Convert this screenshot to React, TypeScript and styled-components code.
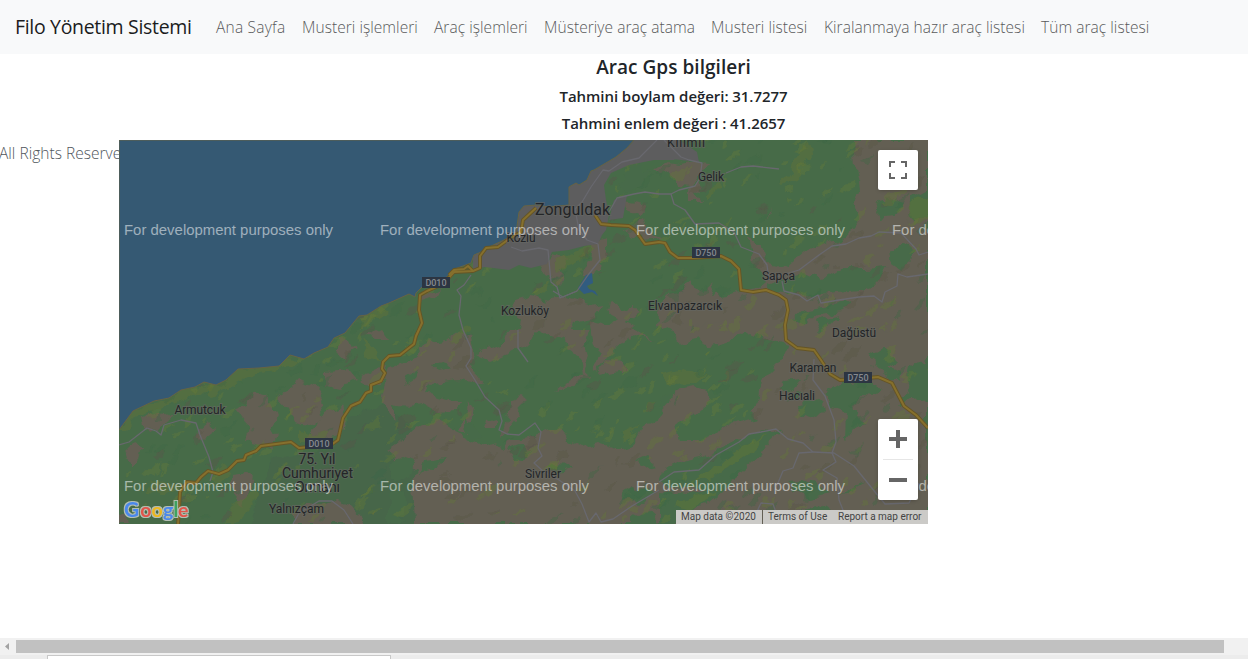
import React from "react";
import styled, { createGlobalStyle } from "styled-components";

const GlobalStyle = createGlobalStyle`
  * { box-sizing: border-box; }
  body { margin: 0; background: #fff; font-family: "Open Sans", "Noto Sans", sans-serif; color: #212529; overflow: hidden; }
`;

const Page = styled.div`
  display: flex;
  flex-direction: column;
  height: 659px;
  width: 1248px;
  overflow: hidden;
`;

const Navbar = styled.nav`
  display: flex;
  align-items: center;
  height: 54px;
  flex: none;
  padding: 0 0 1px 15px;
  background: #f8f9fa;
  white-space: nowrap;
`;

const Brand = styled.a`
  width: 193px;
  font-size: 19.5px;
  font-weight: 400;
  letter-spacing: -0.32px;
  color: #1b1c1d;
`;

const NavLink = styled.a<{ $w: number; $ls?: number }>`
  width: ${(p) => p.$w}px;
  padding-left: 8px;
  font-size: 15.5px;
  font-weight: 300;
  letter-spacing: ${(p) => p.$ls ?? 0.05}px;
  color: #58595a;
`;

const Heading = styled.header`
  display: flex;
  flex-direction: column;
  align-items: center;
  height: 86px;
  flex: none;
  padding-left: 99px;
`;

const Title = styled.h5`
  margin: 0;
  font-size: 19px;
  font-weight: 600;
  line-height: 26px;
  letter-spacing: 0.03px;
`;

const Reading = styled.h6`
  margin: 4px 0 0;
  font-size: 15px;
  font-weight: 600;
  line-height: 23px;
  letter-spacing: -0.05px;

  &:first-of-type {
    margin-top: 5px;
  }
`;

const Content = styled.main`
  display: flex;
  height: 384px;
  flex: none;
`;

const Footer = styled.footer`
  width: 119px;
  overflow: hidden;
  white-space: nowrap;
  font-size: 15.5px;
  font-weight: 300;
  line-height: 26px;
  letter-spacing: 0.02px;
  text-indent: -1px;
  color: #50565c;
`;

const MapFrame = styled.section`
  position: relative;
  width: 809px;
  height: 384px;
  overflow: hidden;
`;

const MapCanvas = styled.svg`
  display: block;
`;

const ControlBox = styled.div<{ $top: number; $height: number }>`
  position: absolute;
  right: 10px;
  top: ${(p) => p.$top}px;
  width: 40px;
  height: ${(p) => p.$height}px;
  display: flex;
  flex-direction: column;
  align-items: center;
  background: #fff;
  border-radius: 2px;
  box-shadow: 0 1px 4px -1px rgba(0, 0, 0, 0.3);
`;

const ControlIcon = styled.svg`
  display: block;
  width: 40px;
  height: 40px;
`;

const Divider = styled.div`
  width: 30px;
  height: 1px;
  background: #e6e6e6;
`;

const Attribution = styled.div`
  position: absolute;
  right: 0;
  bottom: 0;
  display: flex;
  height: 14px;
  font: 10px/14px Roboto, sans-serif;
  color: #444;
  white-space: nowrap;
`;

const Credit = styled.span<{ $w: number; $line?: boolean }>`
  width: ${(p) => p.$w}px;
  padding-left: 5px;
  background: #cbcac7;
  border-right: ${(p) => (p.$line ? "1px solid #625f54" : "0")};
`;

const Filler = styled.div`
  flex: 1;
`;

const ScrollTrack = styled.div`
  display: flex;
  align-items: center;
  height: 17px;
  flex: none;
  background: #f1f1f1;
`;

const ScrollArrow = styled.svg`
  width: 16px;
  height: 17px;
`;

const ScrollThumb = styled.div`
  width: 1208px;
  height: 13px;
  background: #c1c1c1;
`;

const BottomStrip = styled.div`
  height: 4px;
  flex: none;
  padding-left: 47px;
  background: #ececec;
`;

const BottomField = styled.div`
  width: 344px;
  height: 4px;
  background: #fff;
  border: 1px solid #c8c8c8;
  border-bottom: 0;
`;

const SEA =
  "M0 0V290L14 271L35 261L50 258L62 250L76 247L85 242L97 245L107 240L119 229L140 228L160 226L165 221L171 215L185 219L195 213L209 207L215 198L226 193L235 182L240 176L248 175L262 166L270 163L290 154L296 157L297 153L303 147L328 137L333 130L352 123L355 115L362 112L370 107L385 100L397 93L400 72L405 66L417 65L430 67L450 65L450 47L457 43L460 45L468 40L472 31L475 30L497 17L508 8L515 0Z";

const URBAN =
  "M515 0L508 8L472 31L450 47V65H405L400 72L397 93L370 107L354 115V129L366 127L390 130L400 125L412 128L428 124L433 112L450 110L465 106L479 104L483 95L487 90L490 75L487 60L485 45L492 33L510 25L535 20L555 20L560 12L550 0Z M553 19L580 22L578 12L560 0H540Z M495 60L508 55L504 78L490 80Z";

const TAN = [
  "735 0 737 27 740 47 733 63 740 80 727 97 707 103 687 110 667 127 650 123 643 105 630 96 635 120 648 143 640 150 620 152 590 157 597 143 583 150 570 140 560 153 550 155 540 165 538 185 555 195 560 205 580 200 590 206 607 200 630 193 650 200 668 205 660 223 643 240 640 257 632 270 640 278 610 285 585 300 560 300 555 285 575 278 595 260 590 250 575 247 553 253 548 265 540 277 525 285 515 305 500 308 480 302 463 307 450 300 440 288 430 292 415 298 400 300 385 303 365 308 350 300 340 292 320 280 300 287 285 300 271 310 275 322 300 330 293 345 295 384 809 384 809 0",
  "270 226 283 221 300 215 296 208 310 202 327 200 340 190 352 198 355 212 350 226 360 238 365 244 355 243 340 240 315 243 310 253 330 260 342 262 337 272 320 273 305 265 290 267 275 265 278 282 260 260",
  "356 215 385 202 390 191 400 190 402 180 390 173 395 160 412 155 430 160 448 157 470 165 485 163 475 177 455 182 448 195 438 200 430 192 418 193 405 205 390 213 370 222",
  "445 190 470 190 465 203 470 215 465 230 469 238 455 245 438 251 452 239 462 234 460 218 450 210",
  "470 180 490 185 500 178 515 185 510 190 537 201 515 196 498 208 488 220 478 232 475 227 483 214 475 206",
  "492 231 510 229 505 222 490 220 479 234",
  "22 277 38 273 48 274 56 280 42 287 38 293 24 286",
  "5 312 15 302 24 307 21 318 12 327 7 318",
  "80 291 90 282 97 288 92 296 86 300 79 295",
  "116 270 130 265 135 250 145 256 153 265 158 276 150 290 158 297 151 307 135 302 126 300 130 286",
  "160 257 172 250 180 241 195 246 204 250 200 262 204 278 193 286 183 285 176 282 170 268",
  "204 275 222 266 227 280 222 296 205 299 200 310 184 300 195 290",
  "217 200 231 201 235 210 223 217 217 212",
  "207 232 230 230 238 240 218 247 207 244",
  "254 192 262 188 270 200 260 200 250 195",
  "243 235 264 226 267 238 257 245 240 243",
  "112 335 125 333 135 345 128 356 125 368 116 354 112 345",
  "174 373 190 364 215 360 232 366 240 375 245 384 174 384",
  "0 373 7 376 10 384 0 384",
  "560 24 578 20 592 21 582 34 572 46 560 45 552 34 540 36 533 30 548 22",
  "570 50 580 40 584 52 577 55 583 63 570 63",
  "505 60 530 65 520 77 508 72",
  "475 101 490 98 490 113 480 130 470 138 462 136 472 120",
  "433 112 430 121 420 128 432 134 435 145 445 142 440 131 450 120",
  "505 88 525 80 530 92 545 98 522 100 510 97",
  "647 78 655 64 651 74",
  "552 175 572 165 590 170 608 168 600 182 580 185 560 190",
  "490 160 502 170 515 165 520 173 503 183 488 175",
  "302 155 325 148 315 158 300 163",
  "390 260 402 256 410 260 400 269 395 280 388 289 381 295 388 280",
  "350 260 355 268 350 292 340 290 348 275",
  "367 279 377 276 377 288 365 288",
];

const GREEN = [
  "510 28 520 20 520 32 532 30 524 43 510 52 500 44 506 37",
  "650 145 667 138 685 131 705 140 723 128 745 128 770 126 760 141 740 150 710 153 680 155 655 152",
  "770 110 782 105 795 108 795 118 782 131 772 124",
  "760 60 775 57 785 62 776 76 760 78 756 68",
  "790 58 809 48 809 78 793 80",
  "686 170 714 165 730 161 722 172 700 175 686 184 675 180",
  "702 180 720 175 709 188 697 191",
  "664 240 682 238 672 250 658 250",
  "680 263 697 260 708 269 697 280 682 275",
  "705 253 722 243 747 240 766 250 755 256 742 255 736 266 742 277 750 285 735 288 726 300 727 273 710 267",
  "752 215 765 207 775 218 768 226 781 230 779 243 768 236 754 224",
  "792 228 809 218 809 258 790 260 782 266 788 247",
  "545 329 560 322 580 318 598 310 618 301 640 291 661 293 649 304 640 318 620 335 602 348 578 350 552 345 540 341",
  "540 350 578 354 607 336 613 344 592 361 570 371 553 384 540 384",
  "670 340 683 339 700 346 712 354 692 358 675 351",
  "685 368 697 362 709 371 725 382 700 381 691 377",
  "720 352 748 340 732 350",
  "305 322 325 319 315 329 302 333",
  "430 324 456 325 446 331 428 332",
  "388 311 401 306 413 310 404 321 394 319",
  "270 327 285 316 295 320 290 335 276 340",
  "270 357 280 346 287 359 283 384 270 384",
  "505 355 522 345 535 351 525 362 508 361",
  "510 378 525 370 540 384 510 384",
  "518 322 530 316 540 325 524 328",
  "289 237 299 231 295 239 286 244",
  "312 225 326 220 334 228 318 232",
  "346 276 355 288 364 297 352 300",
  "377 302 388 300 385 310 376 307",
  "541 257 550 253 550 265 542 274",
  "667 256 680 250 678 260",
];

/* Scrub: the lighter, yellowish bands along the coast and the ridges. */
const SCRUB = [
  "0 290 14 271 35 261 50 258 62 250 76 247 85 242 97 245 90 250 75 253 60 262 40 268 20 275 8 290",
  "85 245 107 240 119 229 140 228 165 221 171 215 178 222 160 231 140 233 125 242 105 250 90 258",
  "240 176 262 167 268 172 255 180 243 190",
  "434 120 455 112 470 107 478 108 465 120 448 126 436 133",
  "674 25 680 10 690 3 692 14 684 28 675 38 664 45 660 44 669 34",
  "588 55 595 44 602 41 597 52 586 62",
  "790 66 800 56 809 60 809 82 795 84",
  "540 234 560 230 585 236 575 244 550 245",
  "575 342 600 325 625 306 645 296 632 312 612 326 592 340",
  "555 366 575 356 600 350 582 364 562 372",
  "115 365 135 351 140 356 128 372 118 384 108 384",
  "30 345 50 340 60 348 45 355 28 354",
  "90 335 106 326 110 334 98 346",
  "180 290 195 298 212 292 200 303 180 302",
  "245 200 258 212 262 222 248 220",
  "504 292 520 285 510 298 500 302",
  "330 200 345 186 349 192 338 202",
  "412 152 430 140 428 149 418 156",
];

const MINOR_ROADS = [
  "M538 0L520 18L503 22L490 31L484 30L472 47L463 62L456 69L460 90L468 100L479 104L481 120L469 135L458 151L441 158L438 147L432 142L429 110L420 108L403 111L392 107",
  "M458 151L444 157L434 151",
  "M352 135L345 145L338 150L342 156L340 175L344 190L352 208L352 218L347 226L356 240L366 257L380 270L383 281L380 290L388 294L400 295L416 283L422 292L419 308L423 316L415 323L425 332L440 340L456 351L463 364L470 382L477 373L482 382L494 379L513 366L530 356L540 350",
  "M490 72L498 58L515 54L526 52L540 54L552 54L560 50L576 46L581 38L583 23L570 20L562 17L545 0",
  "M607 33L622 27L634 26L660 29",
  "M552 54L555 64L566 70L576 84L600 83L615 92L622 107L640 114L648 125L650 139L680 130L700 115L713 106L727 104L740 98L752 96L760 92L782 93L797 109L800 115L809 112",
  "M663 141L665 151L680 155L688 161L699 155L702 163L720 160L740 157L755 156L763 162L766 152L778 146L779 134L788 137L809 134",
  "M695 219L694 240L706 256L715 280L717 302L713 313L717 322L704 330L718 338L720 360L724 370L722 384",
  "M540 342L555 332L580 330L597 315L620 302L630 294L642 292L657 289L669 299L684 303L694 312L680 313L674 328L664 331L656 350",
  "M694 312L715 313L735 326L756 352L766 364L790 363L800 343",
  "M0 305L10 302L28 288L37 291L42 295L45 285L62 280L77 283L81 295L90 317L94 332L91 341",
  "M174 384L180 373L200 361L213 361L225 370L234 384",
  "M399 190V208L409 222",
  "M632 384L642 363L654 364L659 378L640 370L632 380",
];

const MAIN_ROADS = [
  "M417 68L404 80L402 92L390 99L379 107L367 108L361 116L361 128L354 131L335 132L324 144L308 151L301 155L300 170L303 183L297 196L295 204L281 215L270 216L264 222L263 229L266 233L262 241L252 245L252 251L247 253L241 262L232 266L224 278L219 300L212 305L180 308L172 302L142 306L137 311L127 315L125 320L118 321L109 330L100 334L89 331L82 337L77 343L68 342L61 352L60 370L59 384",
  "M330 135L335 130L345 129L349 126L354 131",
  "M476 75L482 84L492 85L510 86L516 90L526 104L540 102L546 103L551 112L559 118L573 118L602 116L612 121L620 129L622 150L634 152L647 150L660 155L667 160L669 170L666 185L667 200L678 208L695 210L702 220L711 234L721 240L739 239L759 237L773 243L785 266L797 275L809 288",
];

/* Small deterministic flecks give the land its mottled surface. */
const flecks = (() => {
  let seed = 73;
  const rnd = () => {
    seed = (seed * 16807) % 2147483647;
    return seed / 2147483647;
  };
  return Array.from({ length: 800 }, () => {
    const x = rnd() * 809;
    const y = rnd() * 384;
    const l = 5 + rnd() * 13;
    const h = 1 + rnd() * 3.5;
    return {
      d: `M${x} ${y}l${l * 0.45} ${-h - l * 0.3}l${l * 0.55} ${-l * 0.2}l${-l * 0.25} ${h + l * 0.3}l${-l * 0.4} ${l * 0.28}z`,
      tone: rnd(),
    };
  });
})();

const LABELS: { x: number; y: number; t: string; s: number; w: number }[] = [
  { x: 567, y: 7, t: "Kilimli", s: 12.5, w: 38 },
  { x: 592, y: 41.4, t: "Gelik", s: 12, w: 26 },
  { x: 453.5, y: 75, t: "Zonguldak", s: 16, w: 75 },
  { x: 402, y: 102.4, t: "Kozlu", s: 12, w: 29 },
  { x: 406, y: 175.4, t: "Kozluköy", s: 12, w: 48 },
  { x: 566, y: 170.4, t: "Elvanpazarcık", s: 12, w: 74 },
  { x: 659.5, y: 140.4, t: "Sapça", s: 12, w: 33 },
  { x: 735, y: 197.4, t: "Dağüstü", s: 12, w: 44 },
  { x: 694, y: 232.4, t: "Karaman", s: 12, w: 47 },
  { x: 678, y: 260.4, t: "Hacıali", s: 12, w: 36 },
  { x: 81, y: 274.4, t: "Armutcuk", s: 12, w: 51 },
  { x: 198, y: 324, t: "75. Yıl", s: 14, w: 37 },
  { x: 198.5, y: 338.4, t: "Cumhuriyet", s: 14, w: 71 },
  { x: 198.5, y: 352.4, t: "Ormanı", s: 14, w: 45 },
  { x: 177.5, y: 373.4, t: "Yalnızçam", s: 12, w: 55 },
  { x: 424, y: 338.4, t: "Sivriler", s: 12, w: 36 },
];

const SHIELDS = [
  { x: 303, y: 137, t: "D010" },
  { x: 573, y: 107, t: "D750" },
  { x: 186, y: 298, t: "D010" },
  { x: 725, y: 232, t: "D750" },
];

const LOGO: [string, string, number, number][] = [
  ["G", "#4a88ec", 5, 21],
  ["o", "#e0554a", 21.3, 19.5],
  ["o", "#ecb71f", 32.6, 19.5],
  ["g", "#4a88ec", 44, 19.5],
  ["l", "#3fa25f", 54.3, 21],
  ["e", "#e0554a", 58.9, 19.5],
];

const Terrain = () => (
  <MapCanvas width="809" height="384" viewBox="0 0 809 384">
    <defs>
      <filter id="rough" x="0" y="0" width="809" height="384" filterUnits="userSpaceOnUse">
        <feTurbulence type="fractalNoise" baseFrequency="0.07" numOctaves="3" seed="4" />
        <feDisplacementMap in="SourceGraphic" scale="13" xChannelSelector="R" yChannelSelector="G" />
      </filter>
      <filter id="halo" x="-10%" y="-30%" width="120%" height="160%" colorInterpolationFilters="sRGB">
        <feMorphology in="SourceAlpha" operator="dilate" radius="1.3" result="fat" />
        <feFlood floodColor="#b3beb3" />
        <feComposite in2="fat" operator="in" result="edge" />
        <feMerge>
          <feMergeNode in="edge" />
          <feMergeNode in="SourceGraphic" />
        </feMerge>
      </filter>
    </defs>
    <rect width="809" height="384" fill="#476b48" />
    <g filter="url(#rough)">
      <path d="M130 384L150 320L215 308L232 275L270 262L300 300L295 390Z" fill="#46664a" />
      {TAN.map((p) => (
        <polygon key={p} points={p} fill="#635f53" />
      ))}
      {GREEN.map((p) => (
        <polygon key={p} points={p} fill="#476b48" />
      ))}
      {SCRUB.map((p) => (
        <polygon key={p} points={p} fill="#5c723b" opacity="0.6" />
      ))}
      {flecks.map((f) => (
        <path
          key={f.d}
          d={f.d}
          fill={f.tone > 0.5 ? "#667a37" : f.tone > 0.22 ? "#3f6647" : "#575649"}
          opacity={f.tone > 0.5 ? 0.36 : 0.4}
        />
      ))}
    </g>
    <path d={URBAN} fill="#5d5d5e" />
    <path d={SEA} fill="#355973" stroke="#666344" strokeWidth="1" />
    <path d="M459 148L464 140L467 135L473 133L474 143L468 146L470 149L476 151L479 156L473 152L465 154Z" fill="#315c80" />
    <g fill="none" stroke="#68686e" strokeWidth="1.3" strokeLinejoin="round">
      {MINOR_ROADS.map((d) => (
        <path key={d} d={d} />
      ))}
    </g>
    <g fill="none" strokeLinejoin="round">
      {MAIN_ROADS.map((d) => (
        <path key={d} d={d} stroke="#655526" strokeWidth="3.8" />
      ))}
      {MAIN_ROADS.map((d) => (
        <path key={d} d={d} stroke="#86702d" strokeWidth="2" />
      ))}
    </g>
    <g fontFamily="Roboto, sans-serif" textAnchor="middle">
      {LABELS.map((l) => (
        <text
          key={l.t}
          x={l.x}
          y={l.y}
          fontSize={l.s}
          textLength={l.w}
          fill="#232527"
          stroke="#666763"
          strokeOpacity="0.65"
          strokeWidth="1.8"
          paintOrder="stroke"
        >
          {l.t}
        </text>
      ))}
      {SHIELDS.map((s) => (
        <g key={`${s.x}`}>
          <rect x={s.x} y={s.y} width="28" height="11" fill="#2c3542" />
          <text x={s.x + 14} y={s.y + 9} fontSize="9" fontWeight="500" textLength="21" fill="#868a90">
            {s.t}
          </text>
        </g>
      ))}
    </g>
    <g fontFamily="'Liberation Sans', sans-serif" fontSize="15.4" fill="#fff" fillOpacity="0.53">
      {[95.4, 351.4].map((y) =>
        [5, 261, 517, 773].map((x) => (
          <text key={`${x}-${y}`} x={x} y={y} textLength="209" lengthAdjust="spacingAndGlyphs">
            For development purposes only
          </text>
        ))
      )}
    </g>
    <text y="376.5" fontFamily="Lato, sans-serif" fontWeight="700" filter="url(#halo)">
      {LOGO.map(([c, fill, x, size], i) => (
        <tspan key={i} x={x} fontSize={size} fill={fill}>
          {c}
        </tspan>
      ))}
    </text>
  </MapCanvas>
);

const LINKS: { t: string; w: number; ls?: number }[] = [
  { t: "Ana Sayfa", w: 86, ls: 0.22 },
  { t: "Musteri işlemleri", w: 132 },
  { t: "Araç işlemleri", w: 110 },
  { t: "Müsteriye araç atama", w: 167 },
  { t: "Musteri listesi", w: 113 },
  { t: "Kiralanmaya hazır araç listesi", w: 217 },
  { t: "Tüm araç listesi", w: 124 },
];

export default function App() {
  return (
    <Page>
      <GlobalStyle />
      <Navbar>
        <Brand>Filo Yönetim Sistemi</Brand>
        {LINKS.map((l) => (
          <NavLink key={l.t} $w={l.w} $ls={l.ls}>
            {l.t}
          </NavLink>
        ))}
      </Navbar>
      <Heading>
        <Title>Arac Gps bilgileri</Title>
        <Reading>Tahmini boylam değeri: 31.7277</Reading>
        <Reading>Tahmini enlem değeri : 41.2657</Reading>
      </Heading>
      <Content>
        <Footer>All Rights Reserved</Footer>
        <MapFrame>
          <Terrain />
          <ControlBox $top={10} $height={40}>
            <ControlIcon viewBox="0 0 40 40">
              <path d="M12 17V12H17M23 12H28V17M28 23V28H23M17 28H12V23" fill="none" stroke="#666" strokeWidth="2" />
            </ControlIcon>
          </ControlBox>
          <ControlBox $top={279} $height={81}>
            <ControlIcon viewBox="0 0 40 40">
              <path d="M11 20H29M20 11V29" stroke="#666" strokeWidth="4" />
            </ControlIcon>
            <Divider />
            <ControlIcon viewBox="0 0 40 40">
              <path d="M11 20H29" stroke="#666" strokeWidth="4" />
            </ControlIcon>
          </ControlBox>
          <Attribution>
            <Credit $w={87} $line>Map data ©2020</Credit>
            <Credit $w={70}>Terms of Use</Credit>
            <Credit $w={95}>Report a map error</Credit>
          </Attribution>
        </MapFrame>
      </Content>
      <Filler />
      <ScrollTrack>
        <ScrollArrow viewBox="0 0 16 17">
          <path d="M9 5V12L5 8.5Z" fill="#a3a3a3" />
        </ScrollArrow>
        <ScrollThumb />
      </ScrollTrack>
      <BottomStrip>
        <BottomField />
      </BottomStrip>
    </Page>
  );
}
